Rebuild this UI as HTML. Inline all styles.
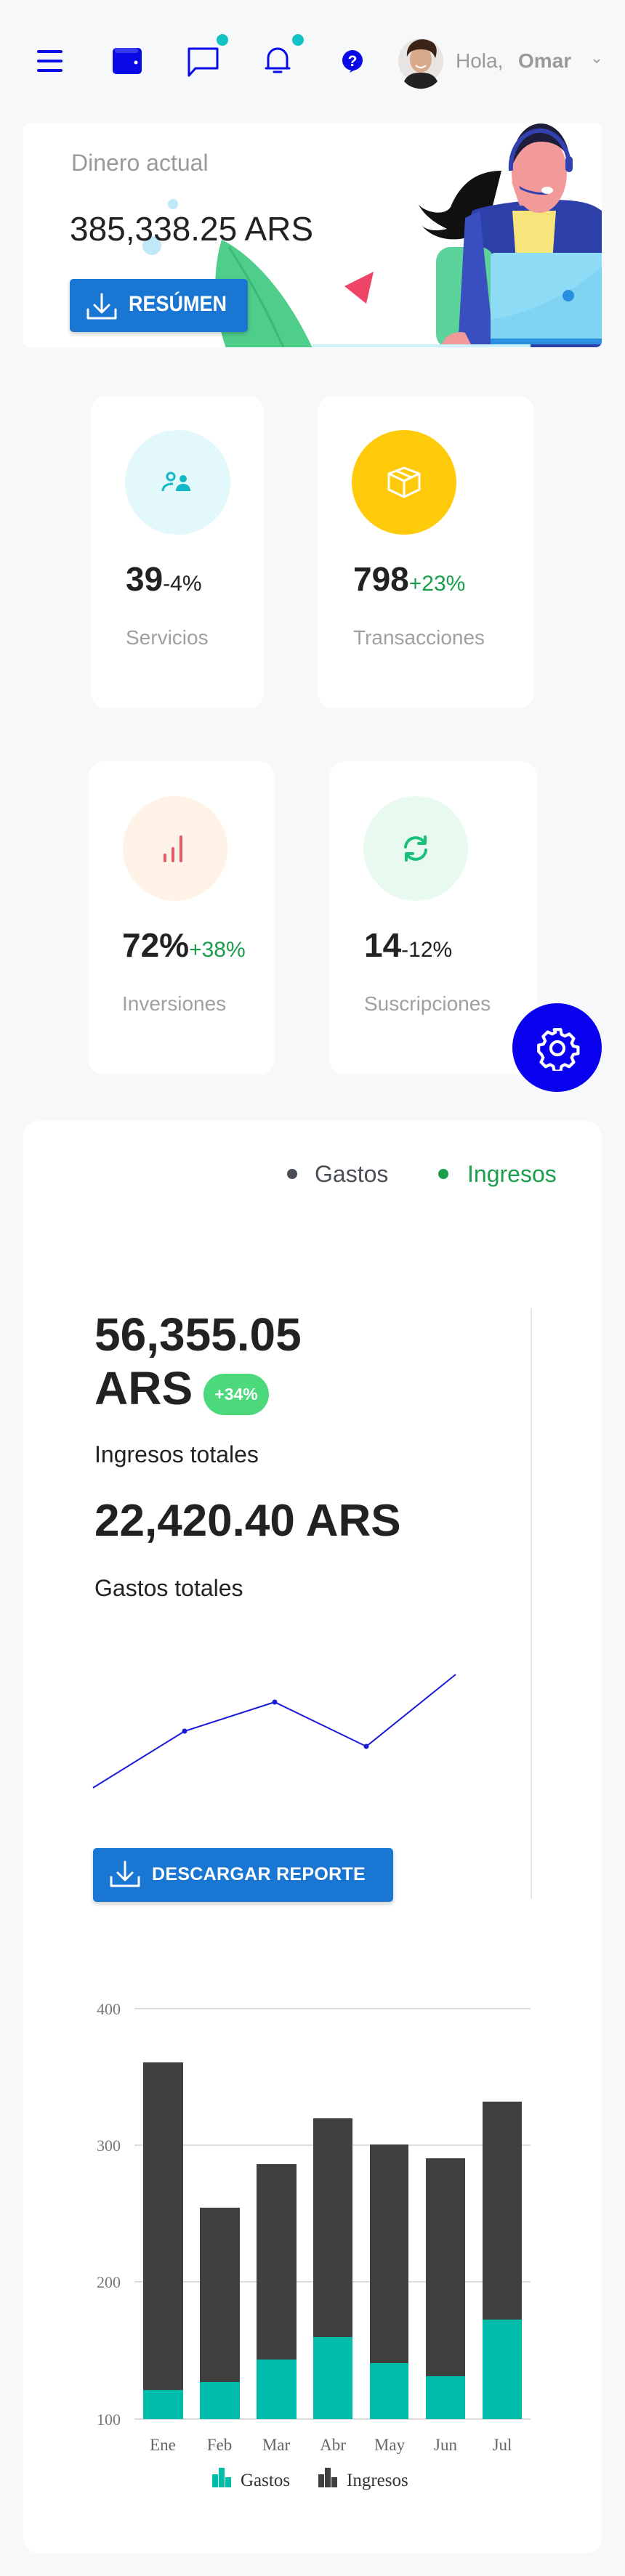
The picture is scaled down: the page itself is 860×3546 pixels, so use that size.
<!DOCTYPE html>
<html><head><meta charset="utf-8"><style>
*{margin:0;padding:0;box-sizing:border-box}
body{width:860px;height:3546px;background:#f7f8fa;position:relative;overflow:hidden;font-family:"Liberation Sans",sans-serif}
.a{position:absolute;white-space:nowrap}
.card{position:absolute;background:#fff;border-radius:22px}
.circ{position:absolute;border-radius:50%}
</style></head><body>

<!-- header icons -->
<svg class="a" style="left:0;top:0" width="860" height="170">
 <g stroke="#0a0ae6" stroke-width="4" stroke-linecap="round" fill="none">
  <path d="M53 71h31M53 84h31M53 97h31"/>
 </g>
 <rect x="155" y="66" width="40" height="36" rx="5" fill="#0a0ae6"/>
 <rect x="158" y="66" width="32" height="7" rx="3" fill="#3a3af0"/>
 <circle cx="187" cy="86" r="2.5" fill="#fff"/>
 <path d="M260 67h39v27h-30l-9 10z" fill="none" stroke="#0a0ae6" stroke-width="3" stroke-linejoin="round"/>
 <circle cx="306" cy="55" r="8" fill="#13c2c2"/>
 <path d="M369 94v-14a13 13 0 0 1 26 0v14zM366 94h32M377 99h10" fill="none" stroke="#0a0ae6" stroke-width="3" stroke-linecap="round"/>
 <circle cx="410" cy="55" r="8" fill="#13c2c2"/>
 <circle cx="485" cy="83" r="14" fill="#0a0ae6"/>
 <path d="M484 95l-3 5 8-4z" fill="#0a0ae6"/>
 <text x="485" y="91" font-size="21" font-weight="bold" fill="#fff" text-anchor="middle" font-family="Liberation Sans">?</text>
 <circle cx="579" cy="84" r="31" fill="#e8e4e2"/>
 <ellipse cx="579" cy="82" rx="15" ry="18" fill="#d9a98c"/>
 <path d="M560 78c-2-20 18-30 35-20 8 6 6 16 4 22-3-8-8-12-20-12s-16 4-19 10z" fill="#3a2418"/>
 <path d="M556 112c5-10 13-12 23-12s18 2 23 12a31 31 0 0 1-46 0z" fill="#222"/>
 <path d="M572 90c4 4 10 4 14 0" stroke="#fff" stroke-width="2" fill="none"/>
 <path d="M817 82l4 4 4-4" stroke="#999" stroke-width="1.6" fill="none"/>
</svg>
<div class="a" style="left:627px;top:68px;font-size:28px;color:#9a9a9a">Hola,</div>
<div class="a" style="left:713px;top:68px;font-size:28px;color:#9a9a9a;font-weight:bold">Omar</div>

<!-- card 1 -->
<div class="card" style="left:32px;top:170px;width:796px;height:308px;border-radius:8px;overflow:hidden"></div>
<svg class="a" style="left:0;top:0" width="860" height="500">
 <defs><clipPath id="c1"><rect x="32" y="170" width="796" height="308" rx="8"/></clipPath></defs>
 <g clip-path="url(#c1)">
  <circle cx="238" cy="281" r="7" fill="#bfe9f7"/>
  <circle cx="209" cy="338" r="13" fill="#bfe9f7"/>
  <path d="M305 330c40 20 90 70 130 160h-120c-20-50-25-110-10-160z" fill="#4fcd8a"/>
  <path d="M315 340c25 40 50 80 80 150" stroke="#3cb877" stroke-width="3" fill="none"/>
  <path d="M474 394l40-20-10 44z" fill="#ee4466"/>
  <path d="M690 235c-40 0-60 25-70 50-10 15-40 5-45 -5 10 20 30 30 40 35-20 5-30 0-35-5 20 25 60 25 90 5z" fill="#111"/>
  <path d="M650 290c10-5 60-15 110-15s60 10 68 15v200h-200c5-80 10-170 22-200z" fill="#2d3fa8"/>
  <path d="M705 290h60l-5 70h-50z" fill="#f7e47a"/>
  <ellipse cx="742" cy="238" rx="38" ry="55" fill="#f29a9a"/>
  <path d="M704 230c0-40 20-60 40-60s38 20 40 50c-10-20-25-25-40-25-20 0-32 15-40 35z" fill="#1d1d3a"/>
  <path d="M703 235a40 50 0 0 1 80-10" stroke="#3340b0" stroke-width="6" fill="none"/>
  <rect x="778" y="215" width="10" height="22" rx="5" fill="#3340b0"/>
  <path d="M712 256c10 8 30 12 42 10" stroke="#3340b0" stroke-width="3" fill="none"/>
  <ellipse cx="753" cy="262" rx="8" ry="5" fill="#fff"/>
  <path d="M715 283l-10-30c-3-5 5-8 8-3l8 33z" fill="#f29a9a"/>
  <rect x="600" y="340" width="80" height="140" rx="20" fill="#5cd39a"/>
  <path d="M640 300l20-10 20 190h-50z" fill="#3a4fbf"/>
  <rect x="675" y="348" width="160" height="125" rx="6" fill="#8fdcf7"/>
  <path d="M675 440c60-10 120-40 160-80v113h-160z" fill="#7fd3f3"/>
  <circle cx="782" cy="407" r="8" fill="#2a8fe0"/>
  <rect x="675" y="466" width="160" height="8" fill="#2a8fe0"/>
  <path d="M610 470c5-10 20-15 30-12l10 20h-45z" fill="#f29a9a"/>
  <rect x="430" y="474" width="300" height="6" fill="#cdf1fb"/>
 </g>
</svg>
<div class="a" style="left:98px;top:206px;font-size:32px;color:#9a9a9a">Dinero actual</div>
<div class="a" style="left:96px;top:288px;font-size:46px;color:#222">385,338.25 ARS</div>
<div class="a" style="left:96px;top:384px;width:245px;height:73px;background:#1976d2;border-radius:5px;box-shadow:0 3px 6px rgba(0,0,0,.2)"></div>
<svg class="a" style="left:118px;top:402px" width="44" height="40"><path d="M22 3v24M12 18l10 10 10-10M3 24v12h38V24" stroke="#fff" stroke-width="3" fill="none" stroke-linecap="round" stroke-linejoin="round"/></svg>
<div class="a" style="left:177px;top:402px;font-size:30px;color:#fff;font-weight:bold;transform:scaleX(.9);transform-origin:left">RESÚMEN</div>

<!-- stat cards -->
<div class="card" style="left:125px;top:545px;width:238px;height:430px"></div>
<div class="card" style="left:437px;top:545px;width:298px;height:430px"></div>
<div class="card" style="left:121px;top:1048px;width:257px;height:431px"></div>
<div class="card" style="left:453px;top:1048px;width:286px;height:431px"></div>

<div class="circ" style="left:172px;top:592px;width:145px;height:144px;background:#e3f8fb"></div>
<svg class="a" style="left:222px;top:648px" width="44" height="32"><circle cx="13" cy="8" r="5" fill="none" stroke="#13b8c8" stroke-width="3"/><path d="M2 28c0-8 8-10 14-10" stroke="#13b8c8" stroke-width="3" fill="none"/><circle cx="30" cy="11" r="5" fill="#13b8c8"/><path d="M20 28c0-7 5-10 10-10s10 3 10 10z" fill="#13b8c8"/></svg>
<div class="circ" style="left:484px;top:592px;width:144px;height:144px;background:#ffca0a"></div>
<svg class="a" style="left:531px;top:640px" width="50" height="48"><path d="M25 4l21 8v22l-21 10-21-10V12zM4 12l21 10 21-10M25 22v22M14 8l21 9" stroke="#fff" stroke-width="3" fill="none" stroke-linejoin="round"/></svg>
<div class="circ" style="left:169px;top:1096px;width:144px;height:144px;background:#fff2e6"></div>
<svg class="a" style="left:222px;top:1148px" width="40" height="40"><path d="M5 37v-8M16 37V20M27 37V4" stroke="#e55a6a" stroke-width="4" stroke-linecap="round"/></svg>
<div class="circ" style="left:500px;top:1096px;width:144px;height:144px;background:#e8f9f0"></div>
<svg class="a" style="left:552px;top:1148px" width="40" height="40"><path d="M6 18a14 14 0 0 1 26-6M34 22a14 14 0 0 1-26 6" stroke="#19c07a" stroke-width="4" fill="none" stroke-linecap="round"/><path d="M33 4v9h-9M7 36v-9h9" stroke="#19c07a" stroke-width="4" fill="none" stroke-linecap="round" stroke-linejoin="round"/></svg>

<div class="a" style="left:173px;top:770px;font-size:46px;font-weight:bold;color:#222">39<span style="font-size:30px;font-weight:normal">-4%</span></div>
<div class="a" style="left:173px;top:862px;font-size:28px;color:#a0a0a0">Servicios</div>
<div class="a" style="left:486px;top:770px;font-size:46px;font-weight:bold;color:#222">798<span style="font-size:30px;font-weight:normal;color:#1a9e4b">+23%</span></div>
<div class="a" style="left:486px;top:862px;font-size:28px;color:#a0a0a0">Transacciones</div>
<div class="a" style="left:168px;top:1274px;font-size:46px;font-weight:bold;color:#222">72%<span style="font-size:30px;font-weight:normal;color:#1a9e4b">+38%</span></div>
<div class="a" style="left:168px;top:1366px;font-size:28px;color:#a0a0a0">Inversiones</div>
<div class="a" style="left:501px;top:1274px;font-size:46px;font-weight:bold;color:#222">14<span style="font-size:30px;font-weight:normal">-12%</span></div>
<div class="a" style="left:501px;top:1366px;font-size:28px;color:#a0a0a0">Suscripciones</div>

<div class="circ" style="left:705px;top:1381px;width:123px;height:122px;background:#0a00f0"></div>
<svg class="a" style="left:736px;top:1412px" width="62" height="62" viewBox="0 0 24 24"><path d="M12 8.5a3.5 3.5 0 1 0 0 7 3.5 3.5 0 0 0 0-7zM10.3 2h3.4l.5 2.6 1.7.9 2.4-1.1 2.4 2.4-1.1 2.4.9 1.7 2.5.5v3.4l-2.5.5-.9 1.7 1.1 2.4-2.4 2.4-2.4-1.1-1.7.9-.5 2.6h-3.4l-.5-2.6-1.7-.9-2.4 1.1-2.4-2.4 1.1-2.4-.9-1.7L2 13.7v-3.4l2.6-.5.9-1.7-1.1-2.4 2.4-2.4 2.4 1.1 1.7-.9z" fill="none" stroke="#fff" stroke-width="1.6" stroke-linejoin="round"/></svg>

<!-- big card -->
<div class="card" style="left:32px;top:1543px;width:796px;height:1972px"></div>
<div class="circ" style="left:395px;top:1609px;width:14px;height:14px;background:#4a4f57"></div>
<div class="a" style="left:433px;top:1598px;font-size:32px;color:#4a4f57">Gastos</div>
<div class="circ" style="left:603px;top:1609px;width:14px;height:14px;background:#1a9e4b"></div>
<div class="a" style="left:643px;top:1598px;font-size:32px;color:#1a9e4b">Ingresos</div>

<div class="a" style="left:130px;top:1800px;font-size:64px;font-weight:bold;color:#222">56,355.05</div>
<div class="a" style="left:130px;top:1874px;font-size:64px;font-weight:bold;color:#222">ARS</div>
<div class="a" style="left:280px;top:1891px;width:90px;height:57px;border-radius:29px;background:#4cd97b;color:#fff;font-size:23px;font-weight:bold;text-align:center;line-height:57px">+34%</div>
<div class="a" style="left:130px;top:1984px;font-size:32px;color:#222">Ingresos totales</div>
<div class="a" style="left:130px;top:2058px;font-size:62px;font-weight:bold;color:#222">22,420.40 ARS</div>
<div class="a" style="left:130px;top:2168px;font-size:32px;color:#222">Gastos totales</div>
<div class="a" style="left:730px;top:1801px;width:2px;height:813px;background:#e6e6e6"></div>
<svg class="a" style="left:0;top:2280px" width="860" height="200">
 <polyline points="128,181 254,103 378,63 504,124 627,25" fill="none" stroke="#1a1ad8" stroke-width="2"/>
 <g fill="#1a1ad8"><circle cx="254" cy="103" r="3.5"/><circle cx="378" cy="63" r="3.5"/><circle cx="504" cy="124" r="3.5"/></g>
</svg>
<div class="a" style="left:128px;top:2544px;width:413px;height:74px;background:#1976d2;border-radius:5px;box-shadow:0 3px 6px rgba(0,0,0,.2)"></div>
<svg class="a" style="left:150px;top:2560px" width="44" height="40"><path d="M22 3v24M12 18l10 10 10-10M3 24v12h38V24" stroke="#fff" stroke-width="3" fill="none" stroke-linecap="round" stroke-linejoin="round"/></svg>
<div class="a" style="left:209px;top:2566px;font-size:25px;color:#fff;font-weight:bold;letter-spacing:0.3px">DESCARGAR REPORTE</div>

<!-- bar chart -->
<svg class="a" style="left:0;top:2700px" width="860" height="800" font-family="Liberation Serif, serif">
 <g stroke="#dcdcdc" stroke-width="2"><path d="M185 65H730M185 253H730M185 441H730M185 630H730"/></g>
 <g fill="#777" font-size="22" text-anchor="end"><text x="166" y="73">400</text><text x="166" y="261">300</text><text x="166" y="449">200</text><text x="166" y="638">100</text></g>
 <g fill="#404040">
  <rect x="197" y="139" width="55" height="491"/><rect x="275" y="339" width="55" height="291"/><rect x="353" y="279" width="55" height="351"/><rect x="431" y="216" width="54" height="414"/><rect x="509" y="252" width="53" height="378"/><rect x="586" y="271" width="54" height="359"/><rect x="664" y="193" width="54" height="437"/>
 </g>
 <g fill="#00bcaa">
  <rect x="197" y="590" width="55" height="40"/><rect x="275" y="579" width="55" height="51"/><rect x="353" y="548" width="55" height="82"/><rect x="431" y="517" width="54" height="113"/><rect x="509" y="553" width="53" height="77"/><rect x="586" y="571" width="54" height="59"/><rect x="664" y="493" width="54" height="137"/>
 </g>
 <g fill="#666" font-size="23" text-anchor="middle"><text x="224" y="673">Ene</text><text x="302" y="673">Feb</text><text x="380" y="673">Mar</text><text x="458" y="673">Abr</text><text x="536" y="673">May</text><text x="613" y="673">Jun</text><text x="691" y="673">Jul</text></g>
 <g fill="#00bcaa"><rect x="292" y="706" width="8" height="18"/><rect x="301" y="697" width="8" height="27"/><rect x="310" y="710" width="8" height="14"/></g>
 <g fill="#404040"><rect x="438" y="706" width="8" height="18"/><rect x="447" y="697" width="8" height="27"/><rect x="456" y="710" width="8" height="14"/></g>
 <g fill="#333" font-size="25"><text x="331" y="722">Gastos</text><text x="477" y="722">Ingresos</text></g>
</svg>
</body></html>
